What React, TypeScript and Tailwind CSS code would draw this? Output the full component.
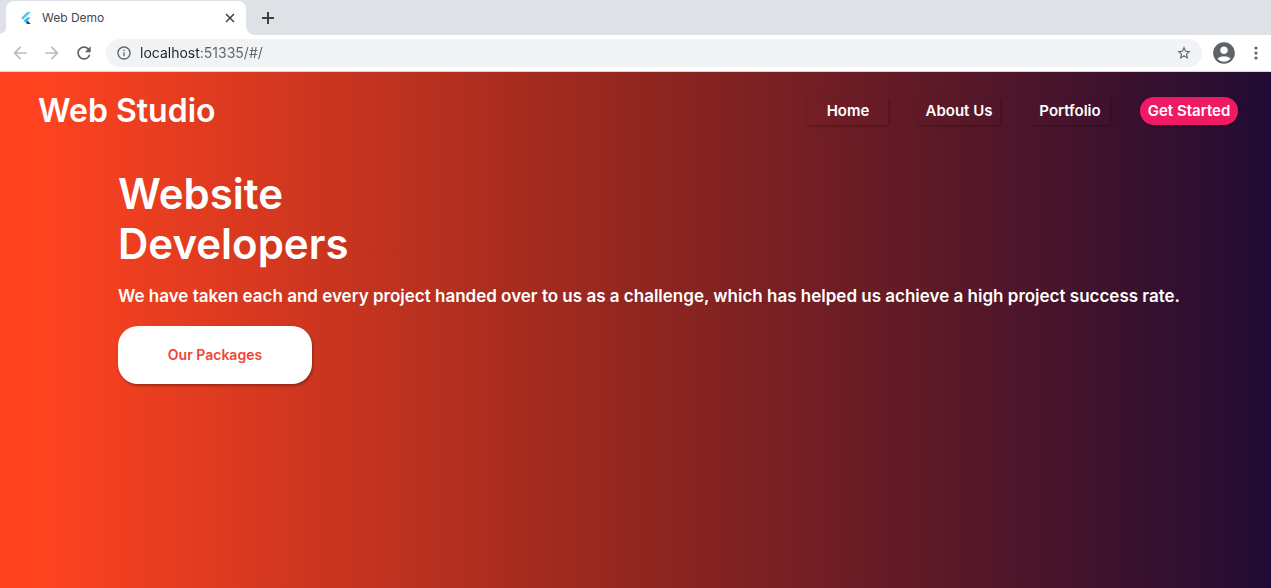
import { useState } from "react";
import {
  MdAccountCircle,
  MdArrowBack,
  MdArrowForward,
  MdInfoOutline,
  MdRefresh,
  MdStarBorder,
} from "react-icons/md";

function FlutterLogo() {
  return (
    <svg viewBox="0 0 24 24" className="size-3" aria-hidden="true">
      <path d="M14.3 0 2.3 12l3.7 3.7L21.7 0z" fill="#54c5f8" />
      <path d="M14.3 11.1 7.9 17.5l3.7 3.7L21.7 11.1z" fill="#42b5f6" />
      <path d="M11.6 21.2 14.3 24h7.4l-6.4-6.5z" fill="#01579b" />
      <path d="m7.9 17.5 3.7-3.7 3.7 3.7-3.7 3.7z" fill="#29b6f6" />
    </svg>
  );
}

function TabStrip() {
  return (
    <div className="flex h-[35px] items-end bg-[#dee1e6]">
      <span className="h-2 w-1.5 bg-[radial-gradient(circle_at_0_0,#dee1e6_6px,#fff_7px)]" />
      <div role="tab" aria-selected="true" className="flex h-[34px] w-60 items-center rounded-t-lg bg-white pr-2.5 pl-3.5">
        <FlutterLogo />
        <span className="ml-2.5 flex-1 text-xs text-[#45494d]">Web Demo</span>
        <button aria-label="Close tab" className="text-[#3c4043]">
          <svg viewBox="0 0 12 12" className="size-3" fill="none" stroke="currentColor" strokeWidth="1.5">
            <path d="m2 2 8 8M10 2l-8 8" />
          </svg>
        </button>
      </div>
      <span className="h-2 w-2 bg-[radial-gradient(circle_at_100%_0,#dee1e6_7px,#fff_8px)]" />
      <button aria-label="New tab" className="flex h-[34px] items-center pl-2 text-[#3c4043]">
        <svg viewBox="0 0 12 12" className="size-3" fill="none" stroke="currentColor" strokeWidth="2">
          <path d="M6 0v12M0 6h12" />
        </svg>
      </button>
    </div>
  );
}

function Toolbar() {
  const [url, setUrl] = useState("localhost:51335/#/");
  return (
    <div className="flex h-[37px] items-center border-b border-[#d5d7da] bg-white pr-2 pl-2.5">
      <div className="flex gap-3">
        <button aria-label="Back" className="text-[#babcbe]">
          <MdArrowBack className="size-5" />
        </button>
        <button aria-label="Forward" className="text-[#babcbe]">
          <MdArrowForward className="size-5" />
        </button>
        <button aria-label="Reload" className="text-[#5f6368]">
          <MdRefresh className="size-5" />
        </button>
      </div>
      <div className="ml-3 flex h-7 flex-1 items-center rounded-full bg-[#f1f3f4] px-2.5 text-[#5f6368]">
        <MdInfoOutline className="size-4" />
        <input
          aria-label="Address"
          value={url}
          onChange={(e) => setUrl(e.target.value)}
          className="ml-2 min-w-0 flex-1 bg-[linear-gradient(90deg,#202124_61px,#5f6368_61px)] bg-clip-text text-sm text-transparent caret-black outline-none"
        />
        <button aria-label="Bookmark">
          <MdStarBorder className="size-4" />
        </button>
      </div>
      <button aria-label="Profile" className="ml-[9px] text-[#5f6368]">
        <MdAccountCircle className="size-[26px]" />
      </button>
      <button aria-label="Menu" className="ml-3 text-[#5f6368]">
        <svg viewBox="0 0 14 14" className="size-3.5" fill="currentColor">
          <circle cx="7" cy="2" r="1.6" />
          <circle cx="7" cy="7" r="1.6" />
          <circle cx="7" cy="12" r="1.6" />
        </svg>
      </button>
    </div>
  );
}

const links = [
  { label: "Home", width: "w-20" },
  { label: "About Us", width: "w-[82px]" },
  { label: "Portfolio", width: "w-20" },
];

export default function App() {
  return (
    <div className="flex min-h-screen flex-col font-['Inter',sans-serif]">
      <header>
        <TabStrip />
        <Toolbar />
      </header>
      <main className="flex-1 bg-[linear-gradient(90deg,#ff4320_0%,#ff4320_3%,#92261f_50%,#5a1828_75%,#210b34_100%)] text-white">
        <nav className="flex items-center justify-between pt-[19px] pr-[33px] pl-[38px]">
          <span className="text-[32px] leading-10 font-semibold">Web Studio</span>
          <div className="flex items-center gap-[30px] text-[15px] font-semibold">
            {links.map((l) => (
              <button
                key={l.label}
                className={`${l.width} h-7 rounded-xs whitespace-nowrap shadow-[1px_1px_3px_rgba(0,0,0,0.3)]`}
              >
                {l.label}
              </button>
            ))}
            <button className="h-7 w-[98px] rounded-full bg-[#f01a64] whitespace-nowrap shadow-[1px_1px_3px_rgba(0,0,0,0.3)]">
              Get Started
            </button>
          </div>
        </nav>
        <section className="pt-[38px] pr-10 pl-[118px]">
          <h1 className="text-[42px] leading-[50px] font-semibold">
            Website
            <br />
            Developers
          </h1>
          <p className="mt-[15px] text-[17px] leading-6 font-semibold">
            We have taken each and every project handed over to us as a challenge, which has helped us achieve a high
            project success rate.
          </p>
          <button className="mt-[18px] h-[58px] w-[194px] rounded-[20px] bg-white text-sm font-semibold text-[#f44336] shadow-[1px_2px_3px_rgba(0,0,0,0.3)]">
            Our Packages
          </button>
        </section>
      </main>
    </div>
  );
}
